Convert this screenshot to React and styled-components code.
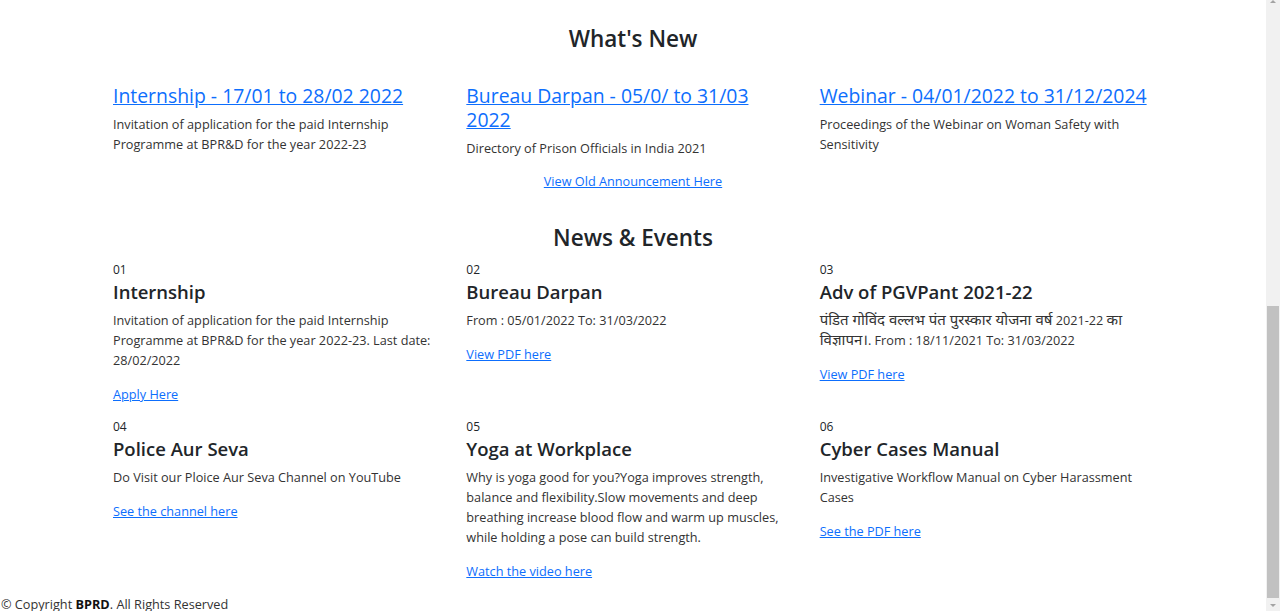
import React from "react";
import styled, { createGlobalStyle } from "styled-components";

const GlobalStyle = createGlobalStyle`
  body {
    margin: 0;
    font-family: "Open Sans", "Noto Sans", "Noto Sans Devanagari", sans-serif;
    font-size: 12.7px;
    line-height: 20px;
    color: #333;
    background: #fff;
    overflow: hidden;
  }
  * {
    box-sizing: border-box;
  }
`;

const Shell = styled.div`
  display: flex;
  height: 100vh;
`;

const Page = styled.div`
  flex: 1;
  min-width: 0;
  padding-top: 24px;
  overflow: hidden;
`;

const Container = styled.div`
  width: 1060px;
  margin: 0 auto;
`;

const SectionTitle = styled.h2`
  margin: ${(p) => p.$top || 0}px 0 0;
  font-size: 22.5px;
  line-height: 29px;
  font-weight: 600;
  color: #212529;
  text-align: center;
`;

const Grid = styled.div`
  display: grid;
  grid-template-columns: repeat(3, 1fr);
  row-gap: 13px;
  margin-top: ${(p) => p.$top}px;
  margin-bottom: ${(p) => p.$bottom}px;
`;

const Col = styled.div`
  padding: 0 14px 0 10px;
`;

const TitleLink = styled.a`
  display: block;
  font-size: 19.4px;
  line-height: 24px;
  font-weight: 500;
  color: #0d6efd;
  text-decoration: underline;
`;

const Desc = styled.p`
  margin: 6px 0 ${(p) => p.$mb ?? 14}px;
  color: #333;
`;

const Hindi = styled.span`
  font-size: 15px;
  line-height: 16px;
`;

const CenterLink = styled.div`
  text-align: center;
  a {
    color: #0d6efd;
  }
`;

const Num = styled.div`
  font-size: 12px;
  color: #212529;
`;

const ItemTitle = styled.h4`
  margin: 0;
  font-size: 18.5px;
  line-height: 24px;
  font-weight: 600;
  color: #212529;
`;

const ItemLink = styled.a`
  display: block;
  color: #0d6efd;
  text-decoration: underline;
`;

const Footer = styled.footer`
  padding-left: 1px;
  color: #333;
  b {
    color: #111;
  }
`;

const ScrollRail = styled.div`
  flex: none;
  width: 14px;
  background: #f1f1f1;
  display: flex;
  flex-direction: column;
  align-items: center;
`;

const Arrow = styled.div`
  width: 0;
  height: 0;
  border-left: 3.5px solid transparent;
  border-right: 3.5px solid transparent;
  ${(p) =>
    p.$up
      ? "border-bottom: 3px solid #a3a3a3;"
      : "border-top: 3px solid #a3a3a3;"}
`;

const Thumb = styled.div`
  margin-top: auto;
  width: 12px;
  height: 292px;
  background: #c1c1c1;
`;

const ArrowBox = styled.div`
  height: 13px;
  display: flex;
  align-items: center;
  justify-content: center;
  padding-top: 1px;
`;

const announcements = [
  {
    title: "Internship - 17/01 to 28/02 2022",
    text: "Invitation of application for the paid Internship Programme at BPR&D for the year 2022-23",
  },
  {
    title: "Bureau Darpan - 05/0/ to 31/03 2022",
    text: "Directory of Prison Officials in India 2021",
  },
  {
    title: "Webinar - 04/01/2022 to 31/12/2024",
    text: "Proceedings of the Webinar on Woman Safety with Sensitivity",
  },
];

const news = [
  {
    n: "01",
    title: "Internship",
    text: "Invitation of application for the paid Internship Programme at BPR&D for the year 2022-23. Last date: 28/02/2022",
    link: "Apply Here",
  },
  {
    n: "02",
    title: "Bureau Darpan",
    text: "From : 05/01/2022 To: 31/03/2022",
    link: "View PDF here",
  },
  {
    n: "03",
    title: "Adv of PGVPant 2021-22",
    text: (
      <>
        <Hindi>पंडित गोविंद वल्लभ पंत पुरस्कार योजना वर्ष</Hindi> 2021-22{" "}
        <Hindi>का विज्ञापन।</Hindi>. From : 18/11/2021 To: 31/03/2022
      </>
    ),
    link: "View PDF here",
  },
  {
    n: "04",
    title: "Police Aur Seva",
    text: "Do Visit our Ploice Aur Seva Channel on YouTube",
    link: "See the channel here",
  },
  {
    n: "05",
    title: "Yoga at Workplace",
    text: "Why is yoga good for you?Yoga improves strength, balance and flexibility.Slow movements and deep breathing increase blood flow and warm up muscles, while holding a pose can build strength.",
    link: "Watch the video here",
  },
  {
    n: "06",
    title: "Cyber Cases Manual",
    text: "Investigative Workflow Manual on Cyber Harassment Cases",
    link: "See the PDF here",
  },
];

export default function App() {
  return (
    <Shell>
      <GlobalStyle />
      <Page>
        <Container>
          <SectionTitle>What's New</SectionTitle>
          <Grid $top={31} $bottom={0}>
            {announcements.map((a) => (
              <Col key={a.title}>
                <TitleLink href="#">{a.title}</TitleLink>
                <Desc $mb={13}>{a.text}</Desc>
              </Col>
            ))}
          </Grid>
          <CenterLink>
            <a href="#">View Old Announcement Here</a>
          </CenterLink>
          <SectionTitle $top={32}>News &amp; Events</SectionTitle>
          <Grid $top={8} $bottom={13}>
            {news.map((item) => (
              <Col key={item.n}>
                <Num>{item.n}</Num>
                <ItemTitle>{item.title}</ItemTitle>
                <Desc>{item.text}</Desc>
                <ItemLink href="#">{item.link}</ItemLink>
              </Col>
            ))}
          </Grid>
        </Container>
        <Footer>
          © Copyright <b>BPRD</b>. All Rights Reserved
        </Footer>
      </Page>
      <ScrollRail>
        <Arrow $up />
        <Thumb />
        <ArrowBox>
          <Arrow />
        </ArrowBox>
      </ScrollRail>
    </Shell>
  );
}
